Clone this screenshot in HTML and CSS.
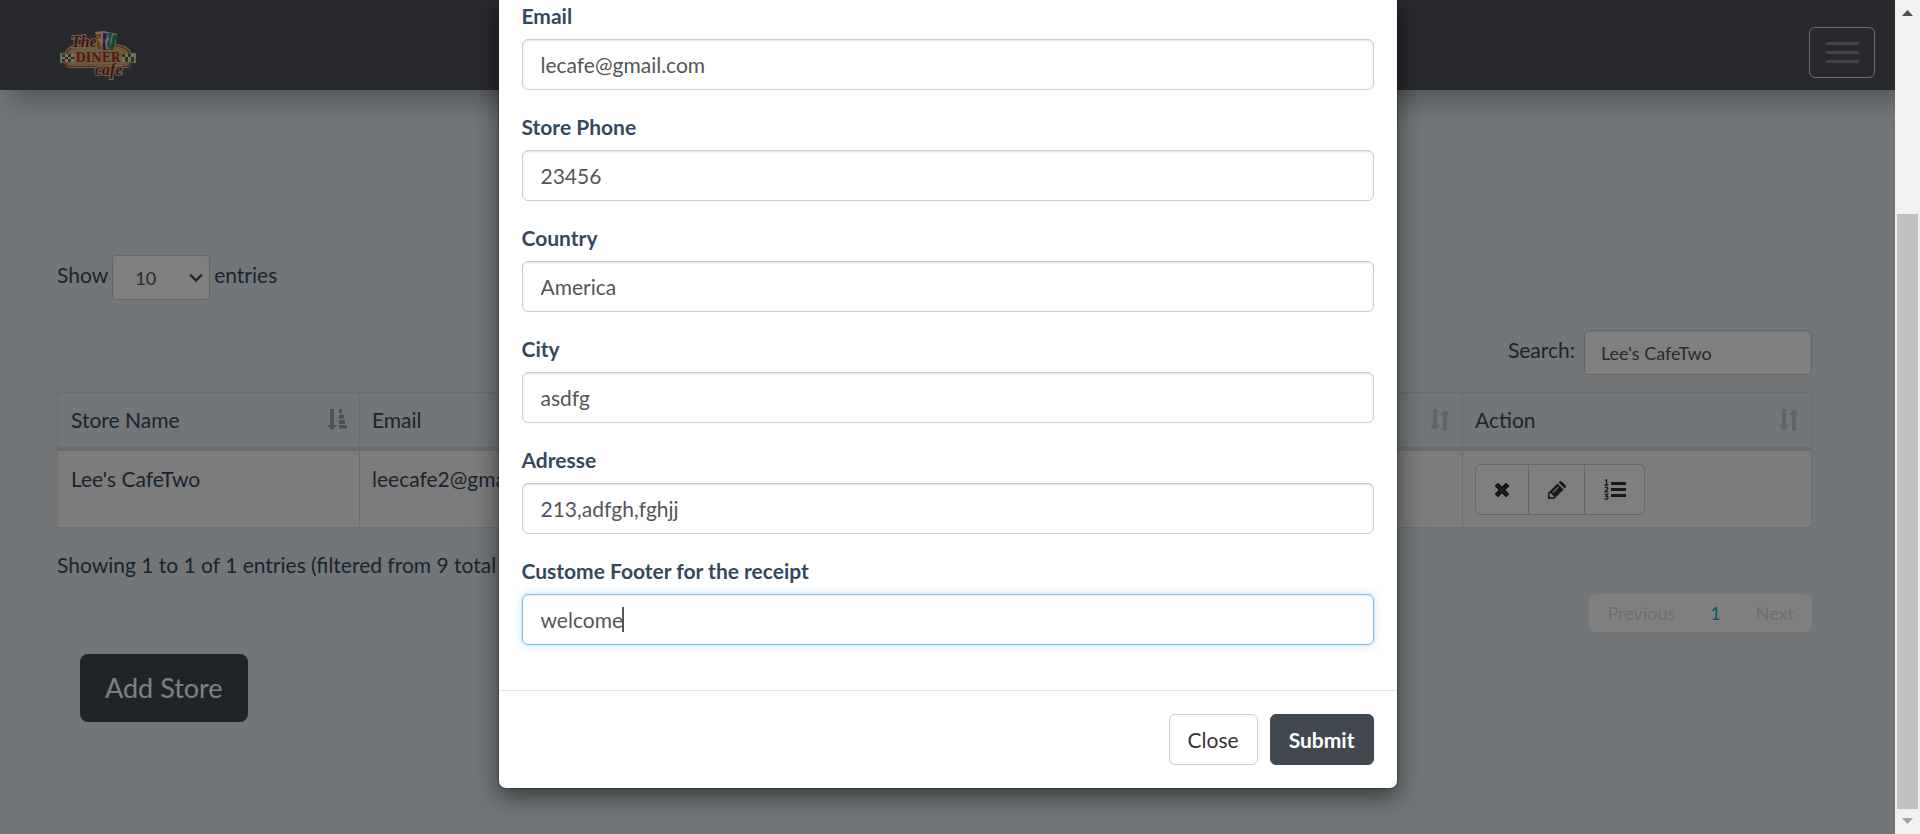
FILE: index.html
```html
<!DOCTYPE html>
<html lang="en">
<head>
<meta charset="utf-8">
<meta name="viewport" content="width=device-width, initial-scale=1">
<title>Stores</title>
<link rel="stylesheet" href="styles.css">
</head>
<body>
<svg class="sprite" aria-hidden="true">
  <symbol id="sort-both" viewBox="0 0 20 22"><path d="M3 0h4v16h3l-5 5.500-5-5.500h3zM13 21.500h4V6h3L15 .5 10 6h3z"/></symbol>
  <symbol id="sort-asc" viewBox="0 0 20 22"><path d="M3 0h4v16h3l-5 5.500-5-5.500h3zM12 0h3v4h-3zM12 5.500h5v4h-5zM12 11h6v4h-6zM12 16h8v3.500h-8z"/></symbol>
</svg>
<div class="screen">
  <div class="page">
    <nav class="navbar">
      <a class="brand" href="#" aria-label="The Diner Cafe">
        <svg width="76" height="50" viewBox="0 0 76 50">
          <path d="M35 1l9-1 13 3-2 14H39z" fill="#e6dab2"/>
          <path d="M38 12c-14 0-26 1-31 6q-2 2-2 4H0v10h5q0 5 6 5h54q6 0 6-5h5V22h-5q0-2-2-4c-5-5-17-6-31-6z" fill="#d8cba4"/>
          <path d="M38 13.500c-14 0-25 1-30 6-4 6-1 9-2 12q0 4 5 4h54q5 0 5-4c-1-3 2-6-2-12-5-5-16-6-30-6z" fill="#cdbb86" stroke="#b33a2d" stroke-width="1.200"/>
          <path d="M38 15.500c-13 0-23 1-28 5.500-3 4-1 7-1 10q0 2.500 3 2.500h52q3 0 3-2.500c0-3 2-6-1-10-5-4.500-15-5.500-28-5.500z" fill="none" stroke="#e5a03a" stroke-width="1.200"/>
          <path d="M36 3h5l1 15h-4z" fill="#d97c12"/><path d="M43 2h4l-1 17h-3z" fill="#7b2b9e"/><path d="M48 2h4l-3 17h-3z" fill="#2196ad"/><path d="M53 4h4l-4 15h-3z" fill="#16964b"/>
          <path d="M38 4v4q0 2 2 3l1 7 1-7q1-1 1-3V3l-1 5h-1V4l-1 4h-1zM48 3l1 5-2 4 1 6h-2l-1-8z" fill="#e6dab2"/>
          <path d="M1 23h13v8H1zM62 23h13v8H62z" fill="#f3e5c0"/>
          <path d="M2 23h3v3H2zM8 23h3v3H8zM2 28h3v3H2zM8 28h3v3H8zM62 23h3v3h-3zM68 23h3v3h-3zM65 28h3v3h-3zM71 28h3v3h-3z" fill="#158a47"/>
          <path d="M5 26h3v2H5zM11 26h3v2h-3zM65 26h3v2h-3zM71 26h3v2h-3z" fill="#b5271f"/>
          <text class="logo-script" x="11" y="16">The</text>
          <text class="logo-name" x="38" y="31">DINER</text>
          <text class="logo-script" x="35" y="44">cafe</text>
        </svg>
      </a>
      <button class="toggler" type="button" aria-label="Toggle navigation"><span></span><span></span><span></span></button>
    </nav>
    <main class="content">
      <label class="length">
        <span>Show</span>
        <span class="select-box">
          <select><option>10</option><option>25</option><option>50</option></select>
          <svg width="14" height="10" viewBox="0 0 14 10"><path d="M1 1.500l6 6 6-6" fill="none" stroke="#4a4a4a" stroke-width="2.400"/></svg>
        </span>
        <span>entries</span>
      </label>
      <label class="search"><span>Search:</span><input type="search" value="Lee's CafeTwo"></label>
      <table class="stores">
        <colgroup><col class="col-name"><col class="col-mail"><col><col class="col-action"></colgroup>
        <thead>
          <tr>
            <th><div class="head">Store Name<svg class="sort sorted"><use href="#sort-asc"/></svg></div></th>
            <th><div class="head">Email<svg class="sort"><use href="#sort-both"/></svg></div></th>
            <th><div class="head">Country<svg class="sort"><use href="#sort-both"/></svg></div></th>
            <th><div class="head">Action<svg class="sort"><use href="#sort-both"/></svg></div></th>
          </tr>
        </thead>
        <tbody>
          <tr>
            <td>Lee's CafeTwo</td>
            <td>leecafe2@gmail.com</td>
            <td>America</td>
            <td>
              <div class="actions">
                <button type="button" aria-label="Delete"><svg width="16" height="16" viewBox="0 0 16 16"><path fill="currentColor" d="M4 1l4 4 4-4 3 3-4 4 4 4-3 3-4-4-4 4-3-3 4-4-4-4z" stroke="currentColor" stroke-linejoin="round"/></svg></button>
                <button type="button" aria-label="Edit"><svg width="18" height="18" viewBox="0 0 18 18"><path fill="currentColor" fill-rule="evenodd" d="M0 18v-6L9.500 2.500l6 6L6 18zM1.500 13v2l1.500 1.500h2L6 15.500 2.500 12zM4.500 11.200l.7.7 5.600-5.600-.7-.7zM10.700 1.500l1-1q1-1 2 0l4 4q1 1 0 2l-1 1z"/></svg></button>
                <button type="button" aria-label="Items"><svg width="22" height="22" viewBox="0 0 22 22"><path fill="currentColor" d="M7 3h15v3H7zM7 9h15v3H7zM7 15h15v3H7z"/><path fill="none" stroke="currentColor" stroke-width="1.300" d="M1 1.500L2.500.8V6M.5 6h4M.8 8.700q1.700-1 2.800 0t-2.800 4h3.500M.7 15.200h3L2 17.200q2 0 2 1.600T.5 20"/></svg></button>
              </div>
            </td>
          </tr>
        </tbody>
      </table>
      <p class="info">Showing 1 to 1 of 1 entries (filtered from 9 total entries)</p>
      <div class="pager"><a href="#" class="off">Previous</a><a href="#">1</a><a href="#" class="off">Next</a></div>
      <button class="add" type="button">Add Store</button>
    </main>
  </div>
  <div class="backdrop">
    <form class="modal" role="dialog" aria-label="Edit store">
      <div class="modal-body">
        <div class="field"><label for="email">Email</label><input id="email" type="text" value="lecafe@gmail.com"></div>
        <div class="field"><label for="phone">Store Phone</label><input id="phone" type="text" value="23456"></div>
        <div class="field"><label for="country">Country</label><input id="country" type="text" value="America"></div>
        <div class="field"><label for="city">City</label><input id="city" type="text" value="asdfg"></div>
        <div class="field"><label for="address">Adresse</label><input id="address" type="text" value="213,adfgh,fghjj"></div>
        <div class="field"><label for="footer">Custome Footer for the receipt</label>
          <div class="active-box"><input id="footer" class="active" type="text" value="welcome"><span class="caret"></span></div>
        </div>
      </div>
      <div class="modal-footer"><button type="button" class="btn">Close</button><button type="submit" class="btn dark">Submit</button></div>
    </form>
  </div>
</div>
<div class="scrollbar" aria-hidden="true">
  <svg width="11" height="6" viewBox="0 0 11 6"><path d="M0 6L5.500 0 11 6z" fill="#505050"/></svg>
  <div class="track"><div class="thumb"></div></div>
  <svg width="11" height="6" viewBox="0 0 11 6"><path d="M0 0h11L5.500 6z" fill="#a3a3a3"/></svg>
</div>
</body>
</html>
```
FILE: styles.css
```css
* { box-sizing: border-box; }
body {
  margin: 0;
  height: 100vh;
  display: flex;
  overflow: hidden;
  font: 21px/30px Lato, "Liberation Sans", sans-serif;
  color: #34495e;
}
button, input, select { font: inherit; margin: 0; }
.sprite { position: absolute; width: 0; height: 0; }
.screen { position: relative; flex: 1; min-width: 0; overflow: hidden; background: #e4ecf1; }

.navbar {
  height: 90px;
  padding: 0 20px 0 60px;
  display: flex;
  align-items: center;
  justify-content: space-between;
  background: #50525a;
  box-shadow: 12px 10px 24px rgba(0, 0, 0, .3);
}
.brand { display: flex; padding-top: 21px; }
.logo-script {
  font: italic bold 16px "Liberation Serif", serif;
  fill: #8c2018;
  stroke: #d8cba4;
  stroke-width: 2px;
  paint-order: stroke;
}
.logo-name { font: bold 13px "DejaVu Serif Condensed", "DejaVu Serif", serif; fill: #bd2925; text-anchor: middle; }
.toggler {
  width: 66px;
  height: 51px;
  margin-top: 15px;
  display: flex;
  flex-direction: column;
  align-items: center;
  justify-content: center;
  gap: 6px;
  background: none;
  border: 1px solid #ddd;
  border-radius: 6px;
}
.toggler span { width: 33px; height: 3px; border-radius: 1px; background: #888; }

.content { display: flex; flex-direction: column; padding: 165px 83px 0 57px; }
.length, .search { display: flex; align-items: center; height: 45px; }
.length { gap: 4px; }
.length > span:not(.select-box), .search span { padding-bottom: 6px; }
.select-box { position: relative; display: flex; }
.select-box select {
  appearance: none;
  width: 98px;
  height: 45px;
  padding: 0 22px;
  font-size: 18px;
  color: #555;
  background: #fff;
  border: 1px solid #ccc;
  border-radius: 4px;
}
.select-box svg { position: absolute; right: 7px; top: 18px; pointer-events: none; }
.search { align-self: flex-end; gap: 9px; margin-top: 30px; }
.search input {
  width: 228px;
  height: 45px;
  padding: 0 16px;
  font-size: 18px;
  color: #555;
  background: #fff;
  border: 1px solid #ccc;
  border-radius: 4px;
  box-shadow: inset 0 1px 2px rgba(0, 0, 0, .1);
}

.stores { width: 100%; margin-top: 17px; table-layout: fixed; border-collapse: collapse; }
.stores th, .stores td { border: 1px solid #dbdbdb; text-align: left; vertical-align: top; font-weight: 400; }
.stores th { padding: 12px; border-bottom: 4px solid #d8d8d8; }
.stores td { height: 77px; padding: 13px 12px 12px; background: #f9f9f9; }
.stores th:first-child, .stores td:first-child { padding-left: 13px; }
.stores .col-name { width: 302px; }
.col-mail { width: 31%; }
.stores .col-action { width: 349px; }
.head { display: flex; justify-content: space-between; align-items: center; }
.sort { width: 20px; height: 22px; fill: #c4c8d2; }
.sort.sorted { fill: #98a0ae; }
.actions { display: flex; }
.actions button {
  height: 51px;
  padding: 0 18px;
  display: flex;
  align-items: center;
  color: #333;
  background: #fff;
  border: 1px solid #ccc;
}
.actions button + button { padding: 0 18px 0 19px; border-left: 0; }
.actions button:first-child { border-radius: 6px 0 0 6px; }
.actions button:last-child { border-radius: 0 6px 6px 0; }

.info { margin: 22px 0 0; }
.pager {
  align-self: flex-end;
  display: flex;
  gap: 35px;
  margin-top: 14px;
  padding: 0 18px;
  font-size: 18px;
  line-height: 38px;
  background: #fff;
  border-radius: 6px;
}
.pager a { color: #1ba8dc; text-decoration: none; }
.pager .off { color: #ddd; }
.add {
  align-self: flex-start;
  height: 68px;
  margin: 22px 0 0 23px;
  padding: 0 25px;
  font-size: 27px;
  color: #fff;
  background: #41484f;
  border: 0;
  border-radius: 8px;
}

.backdrop {
  position: absolute;
  inset: 0;
  display: flex;
  justify-content: center;
  align-items: flex-start;
  background: rgba(0, 0, 0, .5);
}
.modal {
  width: 900px;
  max-width: 100%;
  background: #fff;
  background-clip: padding-box;
  border: 1px solid rgba(0, 0, 0, .2);
  border-top: 0;
  border-radius: 0 0 8px 8px;
  box-shadow: 0 8px 23px rgba(0, 0, 0, .5);
}
.modal-body { padding: 0 23px 22px; }
.field { display: flex; flex-direction: column; gap: 9px; margin-bottom: 23px; }
.field label { font-weight: 700; line-height: 28px; }
.field:first-child { padding-top: 2px; }
.field input {
  width: 100%;
  height: 51px;
  padding: 0 18px;
  color: #555;
  background: #fff;
  border: 1px solid #ccc;
  border-radius: 6px;
  box-shadow: inset 0 1px 2px rgba(0, 0, 0, .12);
}
.active-box { position: relative; display: flex; }
.field .active { border-color: #80bae6; box-shadow: inset 0 1px 2px rgba(0, 0, 0, .08), 0 0 10px rgba(102, 175, 233, .4); }
.caret { position: absolute; left: 100px; top: 13px; width: 2px; height: 25px; background: #555; }
.modal-footer { display: flex; justify-content: flex-end; gap: 12px; padding: 23px; border-top: 1px solid #e5e5e5; }
.btn {
  height: 51px;
  padding: 0 18px;
  color: #333;
  background: #fff;
  border: 1px solid #ccc;
  border-radius: 6px;
}
.btn.dark { color: #fff; font-weight: 700; background: #41484f; border-color: #41484f; }

.scrollbar { width: 25px; display: flex; flex-direction: column; align-items: center; padding: 10px 2px; background: #f1f1f1; }
.track { flex: 1; width: 100%; padding: 198px 0 9px; display: flex; }
.thumb { flex: 1; background: #c1c1c1; }
```
